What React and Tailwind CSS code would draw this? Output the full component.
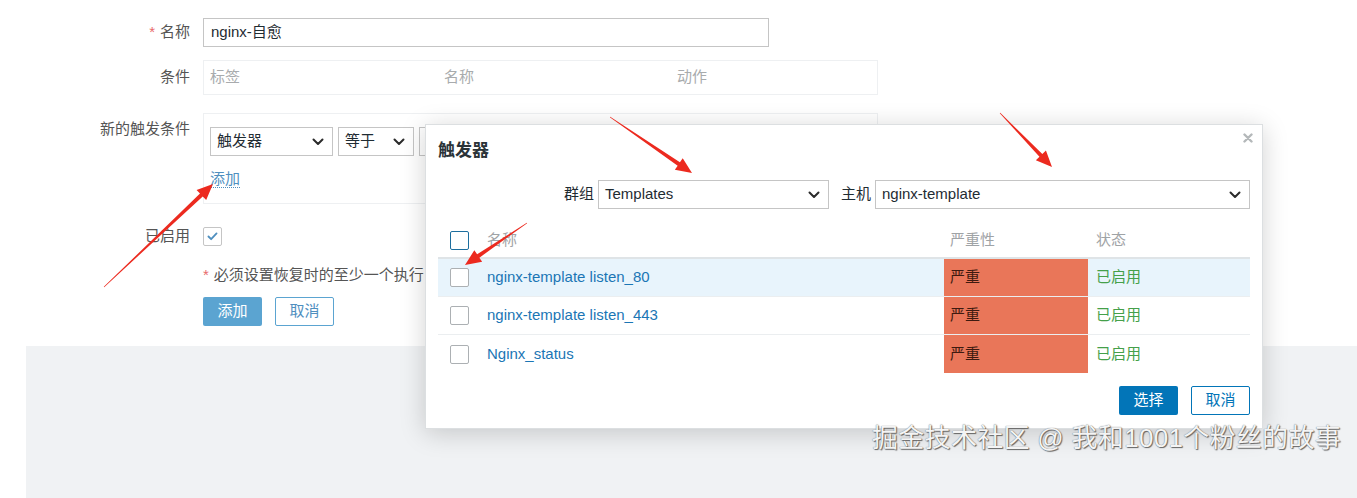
import React from 'react';

const FONT = { fontFamily: '"Liberation Sans", "Noto Sans CJK SC", sans-serif' };

function Chevron({ className = '' }) {
  return (
    <svg viewBox="0 0 12 8" className={`w-[12px] h-[8px] ${className}`} fill="none" stroke="#2b2b2b" strokeWidth="2" strokeLinecap="round" strokeLinejoin="round">
      <path d="M1.5 1.5 L6 6 L10.5 1.5" />
    </svg>
  );
}

function Select({ value, className = '' }) {
  return (
    <div className={`h-[29px] flex items-center justify-between border border-[#c5c5c5] bg-white pl-[6px] pr-[8px] text-[#1f2c33] ${className}`}>
      <span>{value}</span>
      <Chevron />
    </div>
  );
}

// tapered snipping-tool style arrow, points computed from the two ends
function Arrow({ x1, y1, x2, y2 }) {
  const dx = x2 - x1, dy = y2 - y1;
  const len = Math.hypot(dx, dy);
  const ux = dx / len, uy = dy / len;
  const nx = -uy, ny = ux;
  const head = 16, hw = 7, tail = 0.3, neck = 2;
  const bx = x2 - ux * head, by = y2 - uy * head;
  const pts = [
    [x1 + nx * tail, y1 + ny * tail],
    [bx + nx * neck, by + ny * neck],
    [bx + nx * hw, by + ny * hw],
    [x2, y2],
    [bx - nx * hw, by - ny * hw],
    [bx - nx * neck, by - ny * neck],
    [x1 - nx * tail, y1 - ny * tail],
  ];
  return <polygon points={pts.map(p => p.join(',')).join(' ')} fill="#ec2a1f" />;
}

const rows = [
  { name: 'nginx-template listen_80', active: true },
  { name: 'nginx-template listen_443' },
  { name: 'Nginx_status' },
];

export default function App() {
  return (
    <div className="relative w-[1357px] h-[498px] overflow-hidden bg-white text-[15px] text-[#555]" style={FONT}>
      {/* form */}
      <div className="pt-[18px]">
        <div className="flex items-center">
          <div className="w-[190px] text-right"><span className="text-[#e86a6a] mr-[5px]">*</span>名称</div>
          <div className="ml-[13px] w-[566px] h-[29px] border border-[#c5c5c5] flex items-center px-[7px] text-[#1f2c33]">nginx-自愈</div>
        </div>

        <div className="flex items-center mt-[13px]">
          <div className="w-[190px] text-right">条件</div>
          <div className="ml-[13px] w-[675px] h-[35px] border border-[#eef0f2] grid grid-cols-[234px_233px_1fr] items-center text-[#a8abad]">
            <span className="pl-[6px]">标签</span>
            <span className="pl-[6px]">名称</span>
            <span className="pl-[6px]">动作</span>
          </div>
        </div>

        <div className="flex items-start mt-[18px]">
          <div className="w-[190px] text-right pt-[5px]">新的触发条件</div>
          <div className="ml-[13px] w-[675px] h-[91px] border border-[#eef0f2] px-[6px] pt-[13px]">
            <div className="flex gap-[5px]">
              <Select value="触发器" className="w-[123px]" />
              <Select value="等于" className="w-[76px]" />
              <Select value="" className="w-[60px]" />
            </div>
            <div className="mt-[13px] leading-[20px]">
              <span className="text-[#4f8fbf] border-b border-dotted border-[#4f8fbf]">添加</span>
            </div>
          </div>
        </div>

        <div className="flex items-center mt-[21px]">
          <div className="w-[190px] text-right">已启用</div>
          <div className="ml-[13px] w-[19px] h-[19px] border border-[#c5c5c5] rounded-[2px] flex items-center justify-center">
            <svg viewBox="0 0 12 10" className="w-[11px] h-[9px]" fill="none" stroke="#4f8fbf" strokeWidth="2" strokeLinecap="round" strokeLinejoin="round">
              <path d="M1.5 5 L4.5 8 L10.5 1.5" />
            </svg>
          </div>
        </div>

        <div className="ml-[203px] mt-[17px] leading-[20px]">
          <span className="text-[#e86a6a] mr-[5px]">*</span>必须设置恢复时的至少一个执行
        </div>

        <div className="ml-[203px] mt-[12px] flex gap-[13px]">
          <div className="w-[59px] h-[29px] rounded-[2px] bg-[#5ba4d1] text-white flex items-center justify-center">添加</div>
          <div className="w-[59px] h-[29px] rounded-[2px] border border-[#5ba4d1] text-[#4f8fbf] flex items-center justify-center">取消</div>
        </div>
      </div>

      <div className="mt-[20px] ml-[26px] h-[160px] bg-[#f0f2f4]" />

      {/* dialog */}
      <div className="absolute left-[425px] top-[124px] w-[838px] h-[305px] bg-white border border-[#dcdfe1] shadow-[0_4px_24px_rgba(0,0,0,0.18)] px-[12px]">
        <svg viewBox="0 0 10 10" className="absolute right-[9px] top-[8px] w-[10px] h-[10px]" stroke="#b4b8ba" strokeWidth="2.4" strokeLinecap="round">
          <path d="M1.5 1.5 L8.5 8.5 M8.5 1.5 L1.5 8.5" />
        </svg>
        <div className="pt-[14px] text-[17px] font-bold text-[#2a3338] leading-[24px]">触发器</div>

        <div className="mt-[17px] flex justify-end items-center text-[#1f2c33]">
          <span className="mr-[4px]">群组</span>
          <Select value="Templates" className="w-[231px]" />
          <span className="ml-[12px] mr-[4px]">主机</span>
          <Select value="nginx-template" className="w-[375px]" />
        </div>

        <div className="mt-[14px]">
          <div className="h-[36px] flex items-center border-b-2 border-[#dfe4e7] text-[#9fa3a6]">
            <div className="w-[49px] pl-[12px]">
              <div className="w-[19px] h-[19px] rounded-[2px] border-[1.5px] border-[#1d6e9e]" />
            </div>
            <div className="w-[457px]">名称</div>
            <div className="w-[144px] pl-[6px]">严重性</div>
            <div className="flex-1 pl-[8px]">状态</div>
          </div>
          {rows.map((r, i) => (
            <div key={i} className={`h-[38px] flex items-stretch ${i < rows.length - 1 ? 'border-b border-[#ebeef0]' : ''} ${r.active ? 'bg-[#e8f4fc]' : ''}`}>
              <div className="w-[49px] pl-[12px] flex items-center">
                <div className="w-[19px] h-[19px] rounded-[2px] border border-[#acb0b3] bg-white" />
              </div>
              <div className="w-[457px] flex items-center text-[#1b76b5]">{r.name}</div>
              <div className="w-[144px] pl-[6px] flex items-center bg-[#e97659] text-[#3e1a10]">严重</div>
              <div className="flex-1 pl-[8px] flex items-center text-[#45a04a]">已启用</div>
            </div>
          ))}
        </div>

        <div className="mt-[13px] flex justify-end gap-[13px]">
          <div className="w-[59px] h-[29px] rounded-[2px] bg-[#0275b8] text-white flex items-center justify-center">选择</div>
          <div className="w-[59px] h-[29px] rounded-[2px] border border-[#0275b8] text-[#0275b8] flex items-center justify-center">取消</div>
        </div>
      </div>

      {/* annotation arrows */}
      <svg className="absolute inset-0 pointer-events-none" width="1357" height="498">
        <Arrow x1={104} y1={287} x2={213} y2={184} />
        <Arrow x1={610} y1={117} x2={692} y2={173} />
        <Arrow x1={1000} y1={113} x2={1052} y2={167} />
        <Arrow x1={527} y1={223} x2={465} y2={265} />
      </svg>

      {/* watermark */}
      <div className="absolute left-[872px] top-[421px] text-[26px] leading-[34px] tracking-[0.3px] text-[#f4f4f4] [text-shadow:0_0_1px_#555,1px_1px_1px_#666]">
        掘金技术社区 @ 我和1001个粉丝的故事
      </div>
    </div>
  );
}
